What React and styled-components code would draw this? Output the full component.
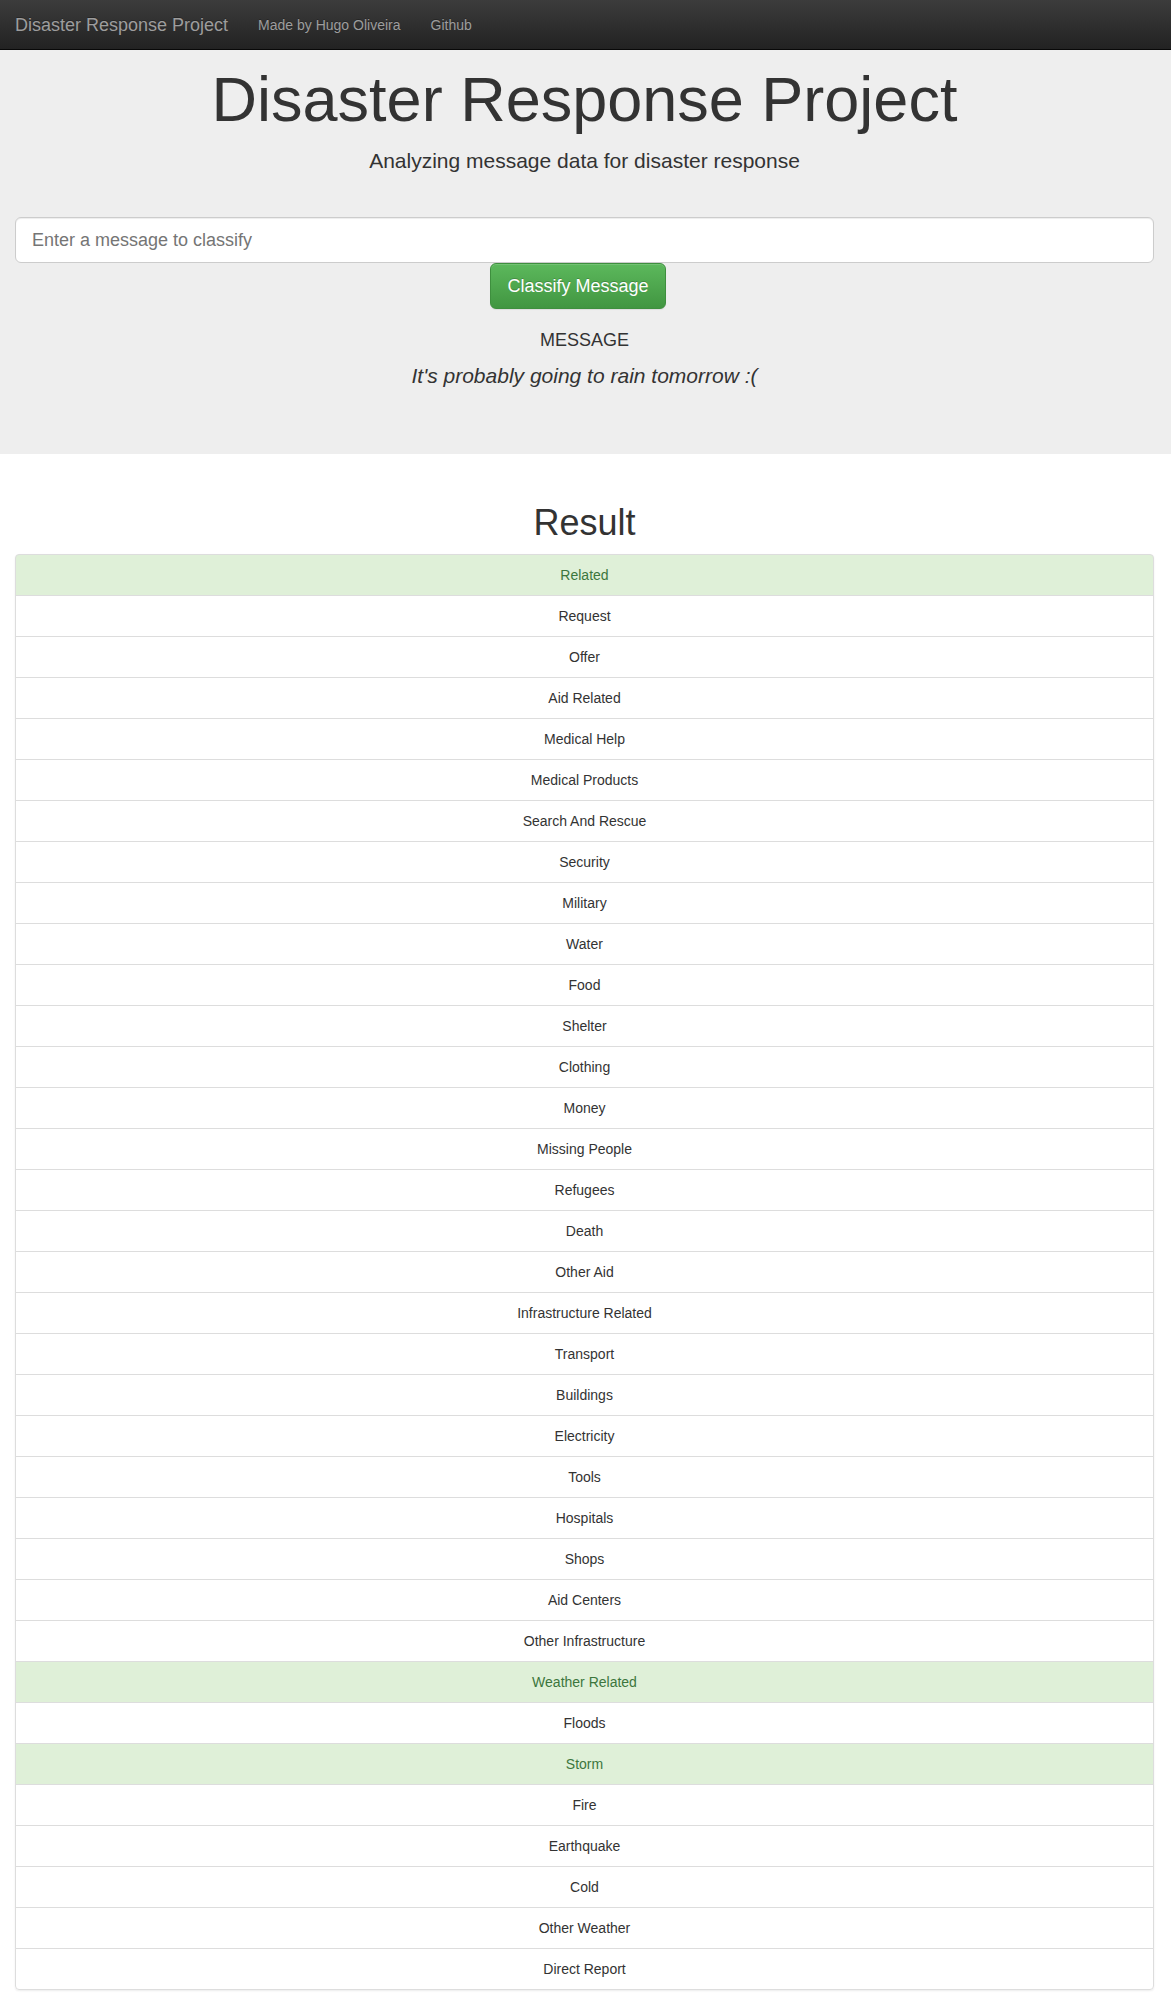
import React from 'react';
import styled, { createGlobalStyle, css } from 'styled-components';

const GlobalStyle = createGlobalStyle`
    * {
        box-sizing: border-box;
    }

    body {
        margin: 0;
        background: #fff;
        color: #333;
        font-family: "Liberation Sans", Arial, Helvetica, sans-serif;
        font-size: 14px;
        line-height: 1.42857143;
    }
`;

const categories = [
    ['Related', true],
    ['Request'],
    ['Offer'],
    ['Aid Related'],
    ['Medical Help'],
    ['Medical Products'],
    ['Search And Rescue'],
    ['Security'],
    ['Military'],
    ['Water'],
    ['Food'],
    ['Shelter'],
    ['Clothing'],
    ['Money'],
    ['Missing People'],
    ['Refugees'],
    ['Death'],
    ['Other Aid'],
    ['Infrastructure Related'],
    ['Transport'],
    ['Buildings'],
    ['Electricity'],
    ['Tools'],
    ['Hospitals'],
    ['Shops'],
    ['Aid Centers'],
    ['Other Infrastructure'],
    ['Weather Related', true],
    ['Floods'],
    ['Storm', true],
    ['Fire'],
    ['Earthquake'],
    ['Cold'],
    ['Other Weather'],
    ['Direct Report'],
];

const Navbar = styled('nav')`
    background-image: linear-gradient(to bottom, #3c3c3c 0%, #222 100%);
    border-bottom: 1px solid #080808;
    display: flex;
    height: 50px;
    padding: 0 15px 0 0;
`;

const Brand = styled('a')`
    color: #9d9d9d;
    font-size: 18px;
    line-height: 20px;
    padding: 15px 15px 14px;
    text-decoration: none;
    text-shadow: 0 -1px 0 rgba(0, 0, 0, 0.25);
`;

const NavLink = styled('a')`
    color: #9d9d9d;
    font-size: 14px;
    line-height: 20px;
    padding: 15px 15px 14px;
    text-decoration: none;
    text-shadow: 0 -1px 0 rgba(0, 0, 0, 0.25);
`;

const Jumbotron = styled('header')`
    background: #eee;
    padding: 15px 17px 67px 15px;
    text-align: center;
`;

const Title = styled('h1')`
    color: #333;
    font-size: 63px;
    font-weight: 500;
    line-height: 1.1;
    margin: 0;
`;

const Lead = styled('p')`
    font-size: 21px;
    font-weight: 200;
    line-height: 30px;
    margin: 12px 0 0;
`;

const Form = styled('form')`
    display: flex;
    flex-direction: column;
    margin-top: 41px;
`;

const Input = styled('input')`
    background: #fff;
    border: 1px solid #ccc;
    border-radius: 6px;
    box-shadow: inset 0 1px 1px rgba(0, 0, 0, 0.075);
    color: #555;
    font-family: inherit;
    font-size: 18px;
    height: 46px;
    line-height: 1.3333333;
    outline: none;
    padding: 10px 16px;
    width: 100%;

    ::placeholder {
        color: #999;
    }
`;

const ButtonRow = styled('div')`
    display: flex;
    justify-content: center;
    padding-right: 13px;
`;

const Button = styled('button')`
    background-image: linear-gradient(to bottom, #5cb85c 0%, #419641 100%);
    border: 1px solid #3e8f3e;
    border-radius: 6px;
    box-shadow: inset 0 1px 0 rgba(255, 255, 255, 0.15), 0 1px 1px rgba(0, 0, 0, 0.075);
    color: #fff;
    cursor: pointer;
    font-family: inherit;
    font-size: 18px;
    height: 46px;
    line-height: 1.3333333;
    padding: 10px 16px;
    text-shadow: 0 -1px 0 rgba(0, 0, 0, 0.2);
`;

const headingText = css`
    color: #333;
    font-weight: 500;
    line-height: 1.1;
    margin: 0;
`;

const MessageLabel = styled('h4')`
    ${headingText}
    font-size: 18px;
    margin-top: 22px;
`;

const MessageText = styled('h3')`
    ${headingText}
    font-size: 21px;
    font-style: italic;
    margin-top: 13px;
`;

const Section = styled('section')`
    padding: 49px 17px 40px 15px;
`;

const ResultTitle = styled('h1')`
    ${headingText}
    font-size: 36px;
    margin-bottom: 11px;
    text-align: center;
`;

const List = styled('ul')`
    border-radius: 4px;
    box-shadow: 0 1px 2px rgba(0, 0, 0, 0.075);
    list-style: none;
    margin: 0;
    padding: 0;
`;

const Item = styled('li')`
    background: ${props => (props.active ? '#dff0d8' : '#fff')};
    border: 1px solid #ddd;
    color: ${props => (props.active ? '#3c763d' : '#333')};
    line-height: 20px;
    margin-bottom: -1px;
    padding: 10px 15px;
    text-align: center;

    &:first-child {
        border-top-left-radius: 4px;
        border-top-right-radius: 4px;
    }

    &:last-child {
        border-bottom-left-radius: 4px;
        border-bottom-right-radius: 4px;
        margin-bottom: 0;
    }
`;

export default function App() {
    return (
        <>
            <GlobalStyle />
            <Navbar>
                <Brand href="#">Disaster Response Project</Brand>
                <NavLink href="#">Made by Hugo Oliveira</NavLink>
                <NavLink href="#">Github</NavLink>
            </Navbar>
            <Jumbotron>
                <Title>Disaster Response Project</Title>
                <Lead>Analyzing message data for disaster response</Lead>
                <Form onSubmit={e => e.preventDefault()}>
                    <Input type="text" placeholder="Enter a message to classify" />
                    <ButtonRow>
                        <Button type="submit">Classify Message</Button>
                    </ButtonRow>
                </Form>
                <MessageLabel>MESSAGE</MessageLabel>
                <MessageText>It's probably going to rain tomorrow :(</MessageText>
            </Jumbotron>
            <Section>
                <ResultTitle>Result</ResultTitle>
                <List>
                    {categories.map(([name, active]) => (
                        <Item key={name} active={active ? 1 : 0}>{name}</Item>
                    ))}
                </List>
            </Section>
        </>
    );
}
